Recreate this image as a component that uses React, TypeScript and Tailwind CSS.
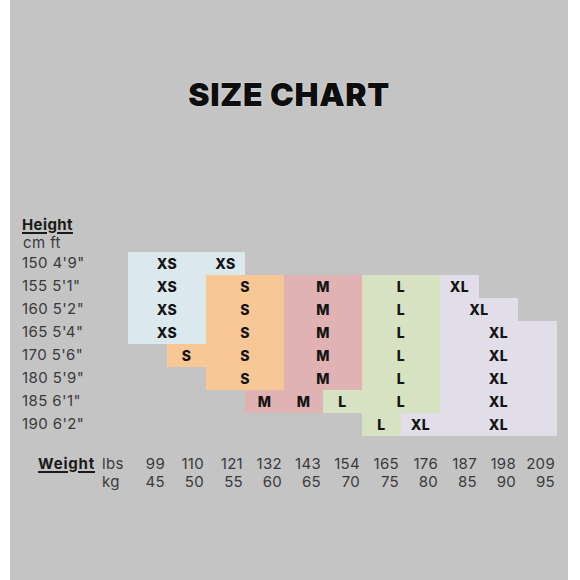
const BLUE = "bg-[#dbe8ee]";
const ORANGE = "bg-[#f8c796]";
const PINK = "bg-[#e1b2b3]";
const GREEN = "bg-[#d6e2c2]";
const LAV = "bg-[#e2dee9]";

type Cell = { pos: string; bg: string; label: string };

const rows: { cm: string; ft: string; cells: Cell[] }[] = [
	{
		cm: "150",
		ft: "4'9\"",
		cells: [
			{ pos: "col-start-1 col-span-2", bg: BLUE, label: "XS" },
			{ pos: "col-start-3 col-span-1", bg: BLUE, label: "XS" },
		],
	},
	{
		cm: "155",
		ft: "5'1\"",
		cells: [
			{ pos: "col-start-1 col-span-2", bg: BLUE, label: "XS" },
			{ pos: "col-start-3 col-span-2", bg: ORANGE, label: "S" },
			{ pos: "col-start-5 col-span-2", bg: PINK, label: "M" },
			{ pos: "col-start-7 col-span-2", bg: GREEN, label: "L" },
			{ pos: "col-start-9 col-span-1", bg: LAV, label: "XL" },
		],
	},
	{
		cm: "160",
		ft: "5'2\"",
		cells: [
			{ pos: "col-start-1 col-span-2", bg: BLUE, label: "XS" },
			{ pos: "col-start-3 col-span-2", bg: ORANGE, label: "S" },
			{ pos: "col-start-5 col-span-2", bg: PINK, label: "M" },
			{ pos: "col-start-7 col-span-2", bg: GREEN, label: "L" },
			{ pos: "col-start-9 col-span-2", bg: LAV, label: "XL" },
		],
	},
	{
		cm: "165",
		ft: "5'4\"",
		cells: [
			{ pos: "col-start-1 col-span-2", bg: BLUE, label: "XS" },
			{ pos: "col-start-3 col-span-2", bg: ORANGE, label: "S" },
			{ pos: "col-start-5 col-span-2", bg: PINK, label: "M" },
			{ pos: "col-start-7 col-span-2", bg: GREEN, label: "L" },
			{ pos: "col-start-9 col-span-3", bg: LAV, label: "XL" },
		],
	},
	{
		cm: "170",
		ft: "5'6\"",
		cells: [
			{ pos: "col-start-2 col-span-1", bg: ORANGE, label: "S" },
			{ pos: "col-start-3 col-span-2", bg: ORANGE, label: "S" },
			{ pos: "col-start-5 col-span-2", bg: PINK, label: "M" },
			{ pos: "col-start-7 col-span-2", bg: GREEN, label: "L" },
			{ pos: "col-start-9 col-span-3", bg: LAV, label: "XL" },
		],
	},
	{
		cm: "180",
		ft: "5'9\"",
		cells: [
			{ pos: "col-start-3 col-span-2", bg: ORANGE, label: "S" },
			{ pos: "col-start-5 col-span-2", bg: PINK, label: "M" },
			{ pos: "col-start-7 col-span-2", bg: GREEN, label: "L" },
			{ pos: "col-start-9 col-span-3", bg: LAV, label: "XL" },
		],
	},
	{
		cm: "185",
		ft: "6'1\"",
		cells: [
			{ pos: "col-start-4 col-span-1", bg: PINK, label: "M" },
			{ pos: "col-start-5 col-span-1", bg: PINK, label: "M" },
			{ pos: "col-start-6 col-span-1", bg: GREEN, label: "L" },
			{ pos: "col-start-7 col-span-2", bg: GREEN, label: "L" },
			{ pos: "col-start-9 col-span-3", bg: LAV, label: "XL" },
		],
	},
	{
		cm: "190",
		ft: "6'2\"",
		cells: [
			{ pos: "col-start-7 col-span-1", bg: GREEN, label: "L" },
			{ pos: "col-start-8 col-span-1", bg: LAV, label: "XL" },
			{ pos: "col-start-9 col-span-3", bg: LAV, label: "XL" },
		],
	},
];

const lbs = ["99", "110", "121", "132", "143", "154", "165", "176", "187", "198", "209"];
const kg = ["45", "50", "55", "60", "65", "70", "75", "80", "85", "90", "95"];

export default function App() {
	return (
		<div className="h-[580px] w-[580px] bg-white font-['Inter',sans-serif] text-[#3a3a3a]">
			<div className="ml-[10px] flex h-[580px] w-[558px] flex-col bg-[#c4c4c4]">
				<h1 className="mt-[79px] text-center text-[32px] font-black leading-none tracking-[0.6px] text-[#0d0d0d] [text-shadow:0_0_2px_rgba(255,255,255,0.7)]">
					SIZE CHART
				</h1>

				<div className="mt-[105px] pl-[12px] text-[15px] leading-[18px] tracking-[0.4px]">
					<div className="font-bold text-[#1a1a1a] underline decoration-[1.5px] underline-offset-[2px]">
						Height
					</div>
					<div className="pl-[1px]">cm ft</div>
				</div>

				<div className="flex flex-col">
					{rows.map((row) => (
						<div key={row.cm} className="flex h-[23px] items-stretch">
							<div className="flex w-[118px] items-center pl-[12px] text-[15px] tracking-[0.4px]">
								{row.cm} {row.ft}
							</div>
							<div className="grid grid-cols-[repeat(11,39px)]">
								{row.cells.map((c, i) => (
									<div
										key={i}
										className={`${c.pos} ${c.bg} flex items-center justify-center text-[14px] font-extrabold tracking-[0.4px] text-[#141414]`}
									>
										{c.label}
									</div>
								))}
							</div>
						</div>
					))}
				</div>

				<div className="mt-[19px] flex text-[15px] leading-[18px] tracking-[0.3px]">
					<div className="w-[91px] pl-[22px] pr-[6px] text-right font-bold tracking-[0.8px] text-[#1a1a1a] underline decoration-[1.5px] underline-offset-[2px]">
						Weight
					</div>
					<div className="w-[27px] pl-[1px]">
						<div>lbs</div>
						<div>kg</div>
					</div>
					<div className="grid grid-cols-[repeat(11,39px)]">
						{lbs.map((v) => (
							<div key={v} className="pr-[2px] text-right">
								{v}
							</div>
						))}
						{kg.map((v) => (
							<div key={v} className="pr-[2px] text-right">
								{v}
							</div>
						))}
					</div>
				</div>
			</div>
		</div>
	);
}
